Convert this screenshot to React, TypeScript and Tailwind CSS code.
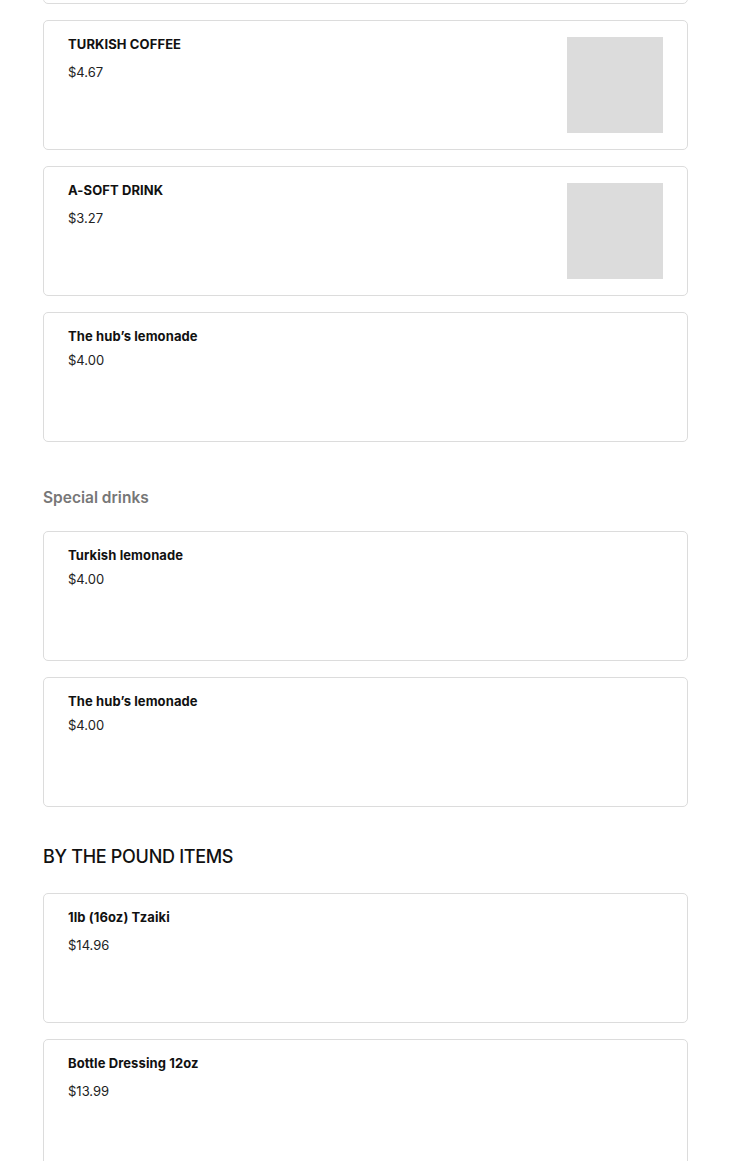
import React from 'react';

type Item = {
  name: string;
  price: string;
  image?: boolean;
  tight?: boolean;
};

const topItems: Item[] = [
  { name: 'TURKISH COFFEE', price: '$4.67', image: true },
  { name: 'A-SOFT DRINK', price: '$3.27', image: true },
  { name: 'The hub’s lemonade', price: '$4.00', tight: true },
];

const specialItems: Item[] = [
  { name: 'Turkish lemonade', price: '$4.00', tight: true },
  { name: 'The hub’s lemonade', price: '$4.00', tight: true },
];

const poundItems: Item[] = [
  { name: '1lb (16oz) Tzaiki', price: '$14.96' },
  { name: 'Bottle Dressing 12oz', price: '$13.99' },
];

const ItemCard: React.FC<{ item: Item }> = ({ item }) => (
  <div className="flex h-[130px] justify-between rounded-[5px] border border-[#dcdcdc] bg-white px-6 py-4">
    <div className="flex flex-col">
      <h4 className="text-[13px] font-bold leading-[14px] tracking-[0.1px] text-[#111]">{item.name}</h4>
      <p className={`${item.tight ? 'mt-[10px]' : 'mt-[14px]'} text-[13px] leading-[14px] text-[#222]`}>
        {item.price}
      </p>
    </div>
    {item.image && <div className="h-[96px] w-[96px] bg-[#dcdcdc]" />}
  </div>
);

export default function App() {
  return (
    <div
      className="min-h-screen overflow-hidden bg-white pl-[43px] pr-[42px]"
      style={{ fontFamily: 'Inter, "Noto Sans", sans-serif' }}
    >
      {/* Previous item, scrolled mostly off screen */}
      <div className="-mt-[126px] h-[130px] rounded-[5px] border border-[#dcdcdc]" />

      <div className="mt-4 flex flex-col gap-4">
        {topItems.map((item, i) => (
          <ItemCard key={i} item={item} />
        ))}
      </div>

      <h3 className="mt-[44px] mb-[21px] text-[15.5px] font-semibold leading-[24px] text-[#777]">
        Special drinks
      </h3>
      <div className="flex flex-col gap-4">
        {specialItems.map((item, i) => (
          <ItemCard key={i} item={item} />
        ))}
      </div>

      <h2 className="mt-[36px] mb-[22px] text-[18px] font-medium leading-[28px] tracking-[-0.3px] text-[#111]">
        BY THE POUND ITEMS
      </h2>
      <div className="flex flex-col gap-4">
        {poundItems.map((item, i) => (
          <ItemCard key={i} item={item} />
        ))}
      </div>
    </div>
  );
}
